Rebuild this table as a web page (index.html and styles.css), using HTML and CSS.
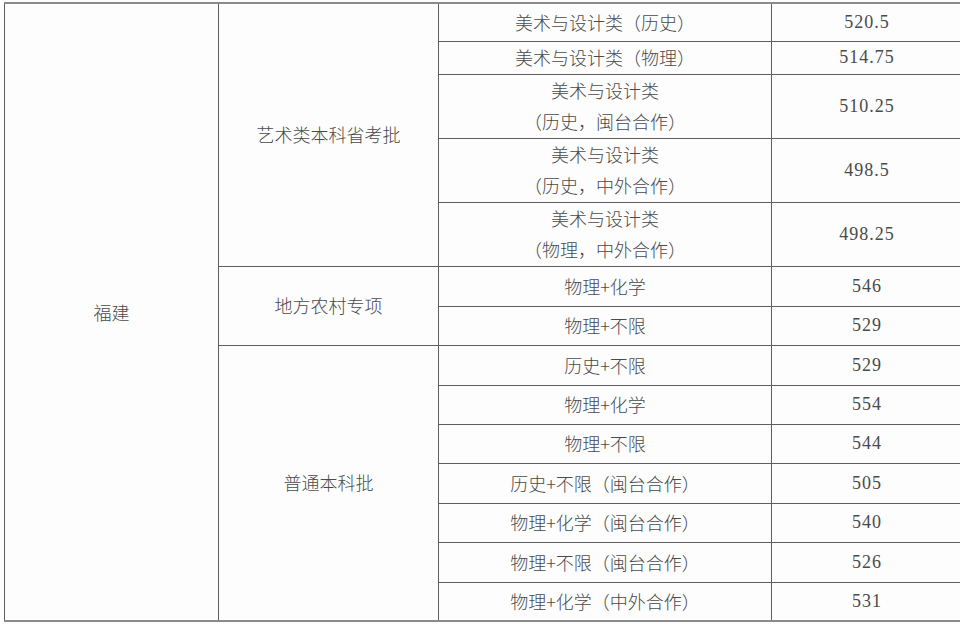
FILE: index.html
```html
<!DOCTYPE html>
<html lang="zh-CN">
<head>
<meta charset="utf-8">
<title>福建录取分数</title>
<link rel="stylesheet" href="styles.css">
</head>
<body>
<table class="score-table">
  <colgroup>
    <col class="c-prov">
    <col class="c-batch">
    <col class="c-subj">
    <col class="c-score">
  </colgroup>
  <tbody>
    <tr class="r38">
      <td rowspan="14">福建</td>
      <td rowspan="5">艺术类本科省考批</td>
      <td>美术与设计类（历史）</td>
      <td class="num">520.5</td>
    </tr>
    <tr class="r33">
      <td>美术与设计类（物理）</td>
      <td class="num">514.75</td>
    </tr>
    <tr class="r64">
      <td>美术与设计类<br>（历史，闽台合作）</td>
      <td class="num">510.25</td>
    </tr>
    <tr class="r64">
      <td>美术与设计类<br>（历史，中外合作）</td>
      <td class="num">498.5</td>
    </tr>
    <tr class="r64">
      <td>美术与设计类<br>（物理，中外合作）</td>
      <td class="num">498.25</td>
    </tr>
    <tr class="r40">
      <td rowspan="2">地方农村专项</td>
      <td>物理+化学</td>
      <td class="num">546</td>
    </tr>
    <tr class="r39">
      <td>物理+不限</td>
      <td class="num">529</td>
    </tr>
    <tr class="r40">
      <td rowspan="7">普通本科批</td>
      <td>历史+不限</td>
      <td class="num">529</td>
    </tr>
    <tr class="r39">
      <td>物理+化学</td>
      <td class="num">554</td>
    </tr>
    <tr class="r39">
      <td>物理+不限</td>
      <td class="num">544</td>
    </tr>
    <tr class="r40">
      <td>历史+不限（闽台合作）</td>
      <td class="num">505</td>
    </tr>
    <tr class="r39">
      <td>物理+化学（闽台合作）</td>
      <td class="num">540</td>
    </tr>
    <tr class="r40">
      <td>物理+不限（闽台合作）</td>
      <td class="num">526</td>
    </tr>
    <tr class="r39">
      <td>物理+化学（中外合作）</td>
      <td class="num">531</td>
    </tr>
  </tbody>
</table>
</body>
</html>
```

FILE: styles.css
```css
html, body {
  margin: 0;
  padding: 0;
  background: #fdfdfd;
}

body {
  width: 960px;
  height: 624px;
  overflow: hidden;
  padding-top: 2px;
  padding-left: 4px;
  box-sizing: border-box;
}

.score-table {
  border-collapse: collapse;
  table-layout: fixed;
  width: 958px;
  font-family: "Liberation Serif", "Noto Sans CJK SC", serif;
  font-size: 18px;
  color: #4a4a4a;
  border-top: 2px solid #8a8a8a;
  border-bottom: 2px solid #8a8a8a;
}

.c-prov { width: 214px; }
.c-batch { width: 220px; }
.c-subj { width: 333px; }
.c-score { width: 191px; }

.score-table td {
  border: 1px solid #5e5e5e;
  padding: 0;
  text-align: center;
  vertical-align: middle;
  line-height: 31px;
  font-family: "Noto Sans CJK SC", sans-serif;
  font-weight: 300;
}

.score-table td.num {
  font-family: "Liberation Serif", serif;
  font-weight: 400;
  letter-spacing: 1px;
}

.r33 { height: 33px; }
.r38 { height: 38px; }
.r39 { height: 39px; }
.r40 { height: 40px; }
.r64 { height: 64px; }
```
